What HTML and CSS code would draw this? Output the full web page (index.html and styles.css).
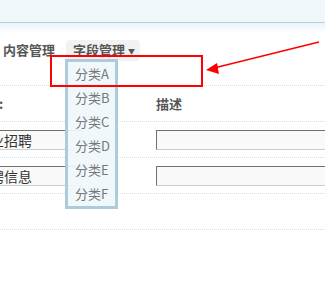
FILE: index.html
```html
<!DOCTYPE html>
<html lang="zh">
<head>
<meta charset="UTF-8">
<meta name="viewport" content="width=device-width, initial-scale=1.0">
<title>字段管理</title>
<link rel="stylesheet" href="styles.css">
</head>
<body>

<div class="topbar"></div>
<div class="shade"></div>

<!-- 导航 -->
<div class="nav">
  <span class="nav-item">内容管理</span>
  <span class="nav-item current">字段管理 <span class="caret">▼</span></span>
</div>

<!-- 字段列表 -->
<div class="field-table">
  <div class="row head">
    <div class="cell">分类名称:</div>
    <div class="cell">描述</div>
  </div>
  <div class="row">
    <div class="cell"><input class="txt short" type="text" value="企业招聘"></div>
    <div class="cell"><input class="txt long" type="text" value=""></div>
  </div>
  <div class="row">
    <div class="cell"><input class="txt short" type="text" value="招聘信息"></div>
    <div class="cell"><input class="txt long" type="text" value=""></div>
  </div>
  <div class="row last">
    <div class="cell"></div>
    <div class="cell"></div>
  </div>
</div>

<!-- 下拉菜单 -->
<ul class="dropdown">
  <li>分类A</li>
  <li>分类B</li>
  <li>分类C</li>
  <li>分类D</li>
  <li>分类E</li>
  <li>分类F</li>
</ul>

<!-- 标注 -->
<div class="mark-box"></div>
<svg class="mark-arrow" width="325" height="100" viewBox="0 0 325 100">
  <line x1="319" y1="42" x2="214" y2="68" stroke="#f00" stroke-width="1.6"/>
  <polygon points="206,70 217,63 219,74" fill="#f00"/>
</svg>

</body>
</html>
```

FILE: styles.css
```css
body {
  margin: 0;
  padding: 0;
  font-family: "Noto Sans CJK SC", "Liberation Sans", sans-serif;
  font-size: 13px;
  color: #555;
  background: #fff;
  overflow: hidden;
  width: 325px;
  height: 289px;
  position: relative;
}

.topbar {
  height: 22px;
  background: #eff7fb;
  border-bottom: 1px solid #b7cfdb;
}
.shade {
  height: 10px;
  background: linear-gradient(#e9f3f9, #fff);
}

/* 导航 */
.nav {
  display: flex;
  align-items: center;
  gap: 11px;
  height: 20px;
  margin-top: 7px;
  padding-left: 3px;
}
.nav-item {
  font-weight: bold;
  line-height: 20px;
  white-space: nowrap;
}
.nav-item.current {
  background: #f2f2f2;
  border-radius: 4px;
  padding: 0 5px 0 7px;
}
.caret {
  font-size: 7px;
  vertical-align: 1px;
}

/* 列表 */
.field-table {
  margin-top: 25px;
  margin-left: -57px;
  width: 600px;
}
.row {
  display: grid;
  grid-template-columns: 213px 1fr;
  height: 35px;
  border-top: 1px dotted #cfe2ee;
  align-items: center;
}
.row.last {
  border-bottom: 1px dotted #cfe2ee;
}
.row.head .cell {
  font-weight: bold;
  padding-left: 4px;
}
.row.head .cell + .cell {
  padding-left: 0;
}
.txt {
  box-sizing: border-box;
  height: 20px;
  border: 1px solid;
  border-color: #707070 #cccccc #cccccc #707070;
  background: #f9f9f9;
  font-family: "Noto Sans CJK SC", sans-serif;
  font-size: 14px;
  color: #333;
  padding: 0 3px;
  margin: 0;
  outline: none;
}
.txt.short {
  width: 110px;
  margin-left: 29px;
}
.txt.long {
  width: 300px;
}

/* 下拉菜单 */
.dropdown {
  position: absolute;
  left: 65px;
  top: 59px;
  width: 47px;
  margin: 0;
  padding: 0;
  list-style: none;
  border: 3px solid #adcbd8;
  background: rgba(240, 247, 251, 0.92);
}
.dropdown li {
  height: 24px;
  line-height: 24px;
  padding-left: 7px;
  color: #777;
  font-size: 13px;
}

/* 标注 */
.mark-box {
  position: absolute;
  left: 50px;
  top: 55px;
  width: 149px;
  height: 28px;
  border: 2px solid #f00;
}
.mark-arrow {
  position: absolute;
  left: 0;
  top: 0;
}
```
